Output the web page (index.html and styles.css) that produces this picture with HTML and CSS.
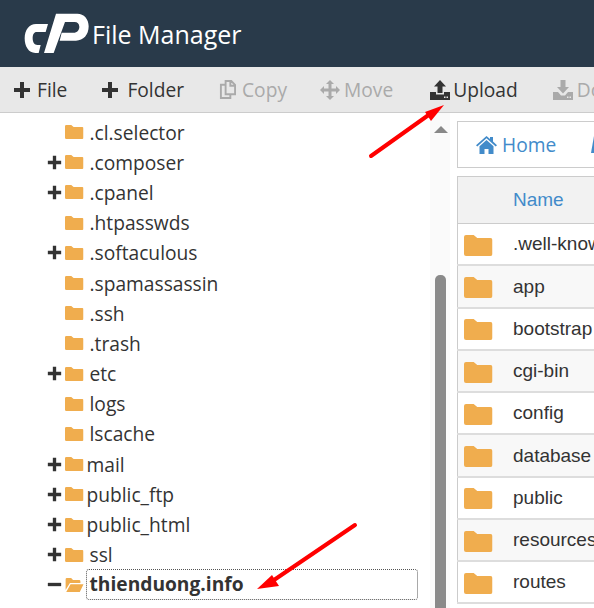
FILE: index.html
```html
<!DOCTYPE html>
<html lang="en">
<head>
<meta charset="UTF-8">
<meta name="viewport" content="width=device-width, initial-scale=1.0">
<title>File Manager</title>
<link rel="stylesheet" href="styles.css">
</head>
<body>
    <svg class="defs" width="0" height="0">
        <symbol id="folder" viewBox="0 0 28 21" preserveAspectRatio="none"><path d="M2 0h7.500l3.500 3h13a2 2 0 0 1 2 2v14a2 2 0 0 1-2 2H2a2 2 0 0 1-2-2V2a2 2 0 0 1 2-2z"/></symbol>
        <symbol id="plus" viewBox="0 0 18 18"><path d="M7 1h4v6h6v4h-6v6H7v-6H1V7h6z"/></symbol>
    </svg>

    <header class="topbar">
        <svg class="logo" viewBox="0 0 216 150" width="72" height="50">
            <path fill="#fff" d="M48 45H84L77 69H50C42 69 38 76 38 88C38 101 44 108 52 108H62L56 132H46C26 132 14 112 14 88C14 62 28 45 48 45Z"/>
            <path fill="#fff" d="M108 14H172C192 14 206 30 206 52C206 78 190 95 168 95H119L125 71H160C172 71 178 63 178 53C178 45 172 39 164 39H135L101 132H72Z"/>
        </svg>
        <span class="app-name">File Manager</span>
    </header>

    <nav class="toolbar">
        <a class="tool"><svg class="ti" width="18" height="18"><use href="#plus"/></svg>File</a>
        <a class="tool tool-folder"><svg class="ti" width="18" height="18"><use href="#plus"/></svg>Folder</a>
        <a class="tool off tool-copy">
            <svg class="ti" viewBox="0 0 18 20" width="17" height="19"><path fill="none" stroke="currentColor" stroke-width="2" d="M7 1h6l4 4v10H7zM7 5H2v14h10v-4M12 1v5h5"/></svg>Copy</a>
        <a class="tool off tool-move">
            <svg class="ti" viewBox="0 0 20 20" width="20" height="20"><path d="M10 0l4 4h-2.500v4.500H16V6l4 4-4 4v-2.500h-4.500V16H14l-4 4-4-4h2.500v-4.500H4V14l-4-4 4-4v2.500h4.500V4H6z"/></svg>Move</a>
        <a class="tool tool-upload">
            <svg class="ti" viewBox="0 0 20 20" width="20" height="20"><path d="M10 0l6 6.500h-3.500V13h-5V6.500H4zM0 12h6v2.500h8V12h6v8H0z"/><path fill="#e8e8e8" d="M14 16.500h1.500V18H14zM16.500 16.500H18V18h-1.500z"/></svg>Upload</a>
        <a class="tool off tool-download">
            <svg class="ti" viewBox="0 0 20 20" width="20" height="20"><path d="M7.500 0h5v7H16l-6 6.500L4 7h3.500zM0 12h5l3 3.500h4l3-3.500h5v8H0z"/><path fill="#e8e8e8" d="M14 16.500h1.500V18H14zM16.500 16.500H18V18h-1.500z"/></svg>Download</a>
    </nav>

    <main class="panes">
        <section class="tree">
            <ul class="tree-list">
                <li class="node"><i class="tog"></i><svg class="fo"><use href="#folder"/></svg><span>.cl.selector</span></li>
                <li class="node"><svg class="tog"><use href="#plus"/></svg><svg class="fo"><use href="#folder"/></svg><span>.composer</span></li>
                <li class="node"><svg class="tog"><use href="#plus"/></svg><svg class="fo"><use href="#folder"/></svg><span>.cpanel</span></li>
                <li class="node"><i class="tog"></i><svg class="fo"><use href="#folder"/></svg><span>.htpasswds</span></li>
                <li class="node"><svg class="tog"><use href="#plus"/></svg><svg class="fo"><use href="#folder"/></svg><span>.softaculous</span></li>
                <li class="node"><i class="tog"></i><svg class="fo"><use href="#folder"/></svg><span>.spamassassin</span></li>
                <li class="node"><i class="tog"></i><svg class="fo"><use href="#folder"/></svg><span>.ssh</span></li>
                <li class="node"><i class="tog"></i><svg class="fo"><use href="#folder"/></svg><span>.trash</span></li>
                <li class="node"><svg class="tog"><use href="#plus"/></svg><svg class="fo"><use href="#folder"/></svg><span>etc</span></li>
                <li class="node"><i class="tog"></i><svg class="fo"><use href="#folder"/></svg><span>logs</span></li>
                <li class="node"><i class="tog"></i><svg class="fo"><use href="#folder"/></svg><span>lscache</span></li>
                <li class="node tight"><svg class="tog"><use href="#plus"/></svg><svg class="fo"><use href="#folder"/></svg><span>mail</span></li>
                <li class="node tight"><svg class="tog"><use href="#plus"/></svg><svg class="fo"><use href="#folder"/></svg><span>public_ftp</span></li>
                <li class="node tight"><svg class="tog"><use href="#plus"/></svg><svg class="fo"><use href="#folder"/></svg><span>public_html</span></li>
                <li class="node"><svg class="tog"><use href="#plus"/></svg><svg class="fo"><use href="#folder"/></svg><span>ssl</span></li>
                <li class="node current">
                    <svg class="tog" viewBox="0 0 18 18"><path d="M1 7h16v4H1z"/></svg>
                    <svg class="fo" viewBox="0 0 30 22" preserveAspectRatio="none"><path d="M1 19V2a2 2 0 0 1 2-2h7l3 3h10a2 2 0 0 1 2 2v3H8zM2 22l7-12h21l-6 12z"/></svg>
                    <span class="cur-name">thienduong.info</span>
                </li>
            </ul>
            <div class="scrollbar">
                <div class="arrow-up"></div>
                <div class="thumb"></div>
            </div>
        </section>

        <section class="files">
            <div class="crumbs">
                <a class="crumb">
                    <svg viewBox="0 0 21 18" width="21" height="18"><path fill="currentColor" d="M10.500 0l3.500 3V1h3v4.500l4 3.700-1.300 1.400-9.200-8.300-9.200 8.300L0 9.200zM10.500 4l7 6.300V18h-5v-5h-4v5h-5v-7.700z"/></svg>Home</a>
                <svg class="up" viewBox="0 0 12 18" width="12" height="18"><path fill="#428bca" d="M3 0L0 17h4L8 0z"/></svg>
            </div>
            <table class="list">
                <thead><tr><th>Name</th></tr></thead>
                <tbody>
                    <tr><td><svg class="big"><use href="#folder"/></svg><span>.well-known</span></td></tr>
                    <tr><td><svg class="big"><use href="#folder"/></svg><span>app</span></td></tr>
                    <tr><td><svg class="big"><use href="#folder"/></svg><span>bootstrap</span></td></tr>
                    <tr><td><svg class="big"><use href="#folder"/></svg><span>cgi-bin</span></td></tr>
                    <tr><td><svg class="big"><use href="#folder"/></svg><span>config</span></td></tr>
                    <tr><td><svg class="big"><use href="#folder"/></svg><span>database</span></td></tr>
                    <tr><td><svg class="big"><use href="#folder"/></svg><span>public</span></td></tr>
                    <tr><td><svg class="big"><use href="#folder"/></svg><span>resources</span></td></tr>
                    <tr><td><svg class="big"><use href="#folder"/></svg><span>routes</span></td></tr>
                </tbody>
            </table>
        </section>
    </main>

    <!-- red annotation arrows drawn over the screenshot -->
    <svg class="marks" viewBox="0 0 594 608" width="594" height="608">
        <path fill="none" stroke="#f00" stroke-width="4" stroke-linecap="round" d="M371 156L430 114"/>
        <path fill="#f00" d="M444 105L425 112 431 121z"/>
        <path fill="none" stroke="#f00" stroke-width="4" stroke-linecap="round" d="M355 525L274 580"/>
        <path fill="#f00" d="M257 589L272 575 279 586z"/>
    </svg>
</body>
</html>
```

FILE: styles.css
```css
/* cPanel file manager */
html, body {
    margin: 0;
    height: 100%;
    overflow: hidden;
}

body {
    font-family: "Open Sans", sans-serif;
    font-size: 19.2px;
    color: #333;
    background-color: #fff;
}

.defs {
    position: absolute;
}

.topbar {
    display: flex;
    align-items: center;
    height: 67px;
    padding-left: 20px;
    background-color: #293a4a;
    color: #fff;
}

.app-name {
    font-size: 25px;
}

.toolbar {
    display: flex;
    align-items: center;
    height: 45px;
    padding-left: 13px;
    background-color: #e8e8e8;
    border-bottom: 1px solid #ccc;
    color: #333;
    white-space: nowrap;
    overflow: hidden;
}

.tool {
    display: flex;
    align-items: center;
    gap: 6px;
    flex: none;
}

.tool .ti {
    fill: currentColor;
}

.tool.off {
    color: #aaa;
}

.tool-folder { margin-left: 34px; gap: 8px; }
.tool-copy { margin-left: 35px; }
.tool-move { margin-left: 33px; gap: 4px; }
.tool-upload { margin-left: 37px; gap: 3px; }
.tool-download { margin-left: 35px; gap: 4px; }

.panes {
    display: flex;
    height: 495px;
}

.tree {
    display: flex;
    width: 450px;
    flex: none;
    background: linear-gradient(to right, #fff 430px, #fafafa 430px);
}

.tree-list {
    list-style: none;
    margin: 4px 0 0;
    padding: 0 0 0 47px;
    width: 371px;
    flex: none;
}

.node {
    display: flex;
    align-items: center;
    height: 30.2px;
    white-space: nowrap;
}

.tog {
    display: block;
    width: 15px;
    height: 15px;
    margin-right: 3px;
    fill: #333;
    flex: none;
}

.fo {
    width: 18.500px;
    height: 14px;
    margin-right: 6px;
    fill: #f0ad4e;
    flex: none;
}

.tight span {
    margin-left: -3px;
}

.current {
    position: relative;
    font-weight: 700;
}

.cur-name {
    flex: 1;
    margin-left: -4px;
    padding: 2px 3px 3px;
    border: 1px dotted #555;
    border-radius: 3px;
    line-height: 24px;
}

.scrollbar {
    margin-left: 17px;
    width: 11px;
    display: flex;
    flex-direction: column;
    align-items: center;
}

.arrow-up {
    margin-top: 13px;
    border-left: 7px solid transparent;
    border-right: 7px solid transparent;
    border-bottom: 7px solid #888;
}

.thumb {
    margin-top: 142px;
    flex: 1;
    width: 11px;
    background-color: #8a8a8a;
    border-radius: 5px 5px 0 0;
}

.files {
    margin-left: 7px;
    flex: 1;
    padding-top: 8px;
    min-width: 0;
}

.crumbs {
    display: flex;
    align-items: center;
    height: 45px;
    padding-left: 18px;
    border: 1px solid #ccc;
    border-right: 0;
    color: #428bca;
    overflow: hidden;
}

.crumb {
    display: flex;
    align-items: center;
    gap: 5px;
    flex: none;
}

.up {
    margin-left: 35px;
    flex: none;
}

.list {
    width: 137px;
    margin-top: 8px;
    border-collapse: collapse;
    table-layout: fixed;
    border-left: 1px solid #ccc;
    font-family: "Liberation Sans", sans-serif;
    font-size: 19px;
}

.list th {
    height: 46px;
    padding: 0 0 0 55px;
    text-align: left;
    font-weight: 400;
    color: #428bca;
    background-color: #f2f2f2;
    border-top: 1px solid #ccc;
    border-bottom: 1px solid #ccc;
}

.list td {
    height: 39.250px;
    padding: 1px 0 0 6px;
    border-bottom: 2px solid #ddd;
    white-space: nowrap;
    overflow: hidden;
}

.list tr:nth-child(even) td {
    background-color: #f8f8f8;
}

.big {
    width: 28.500px;
    height: 21px;
    margin-right: 20.500px;
    fill: #f0ad4e;
    vertical-align: middle;
}

.marks {
    position: absolute;
    left: 0;
    top: 0;
    pointer-events: none;
}
```
